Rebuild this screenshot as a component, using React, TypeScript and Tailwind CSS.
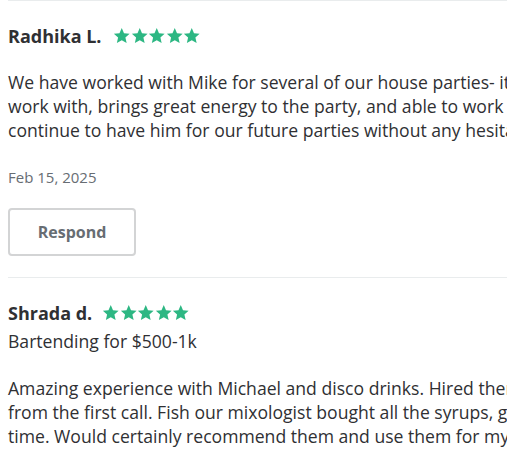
const font = { fontFamily: '"Open Sans", "Liberation Sans", sans-serif' };

function Stars() {
  return (
    <div className="flex items-center">
      {[0, 1, 2, 3, 4].map((i) => (
        <svg key={i} viewBox="0 0 24 24" className="w-[17.5px] h-[17.5px] fill-[#2db783]">
          <path d="M12 1.5l3.1 7.1 7.7.7-5.8 5.1 1.7 7.6L12 18l-6.7 4 1.7-7.6-5.8-5.1 7.7-.7z" />
        </svg>
      ))}
    </div>
  );
}

export default function App() {
  return (
    <div className="w-[507px] h-[467px] overflow-hidden bg-white text-[#2f3033]" style={font}>
      <div className="ml-[8px] w-[800px]">
        <div className="border-t border-[#e9eced] pt-[21px] pb-[21px]">
          <div className="flex items-center gap-[12px]">
            <span className="text-[18px] leading-[28px] font-bold">Radhika L.</span>
            <Stars />
          </div>
          <div className="mt-[20px] text-[17.6px] leading-[24px] whitespace-nowrap">
            We have worked with Mike for several of our house parties- it's always a pleasure to
            <br />
            work with, brings great energy to the party, and able to work with our requests. We will
            <br />
            continue to have him for our future parties without any hesitation.
          </div>
          <div className="mt-[25px] text-[15px] leading-[20px] text-[#676d73]">Feb 15, 2025</div>
          <button className="mt-[21px] w-[128px] h-[48px] border-2 border-[#d3d4d5] rounded-[4px] text-[16px] font-bold text-[#676d73]">
            Respond
          </button>
        </div>
        <div className="border-t border-[#e9eced] pt-[21px]">
          <div className="flex items-center gap-[10px]">
            <span className="text-[18px] leading-[28px] font-bold">Shrada d.</span>
            <Stars />
          </div>
          <div className="mt-[2px] text-[17.6px] leading-[24px]">Bartending for $500-1k</div>
          <div className="mt-[23px] text-[17.6px] leading-[24px] whitespace-nowrap">
            Amazing experience with Michael and disco drinks. Hired them for our party and they were great
            <br />
            from the first call. Fish our mixologist bought all the syrups, garnishes and everything on
            <br />
            time. Would certainly recommend them and use them for my next party.
          </div>
        </div>
      </div>
    </div>
  );
}
